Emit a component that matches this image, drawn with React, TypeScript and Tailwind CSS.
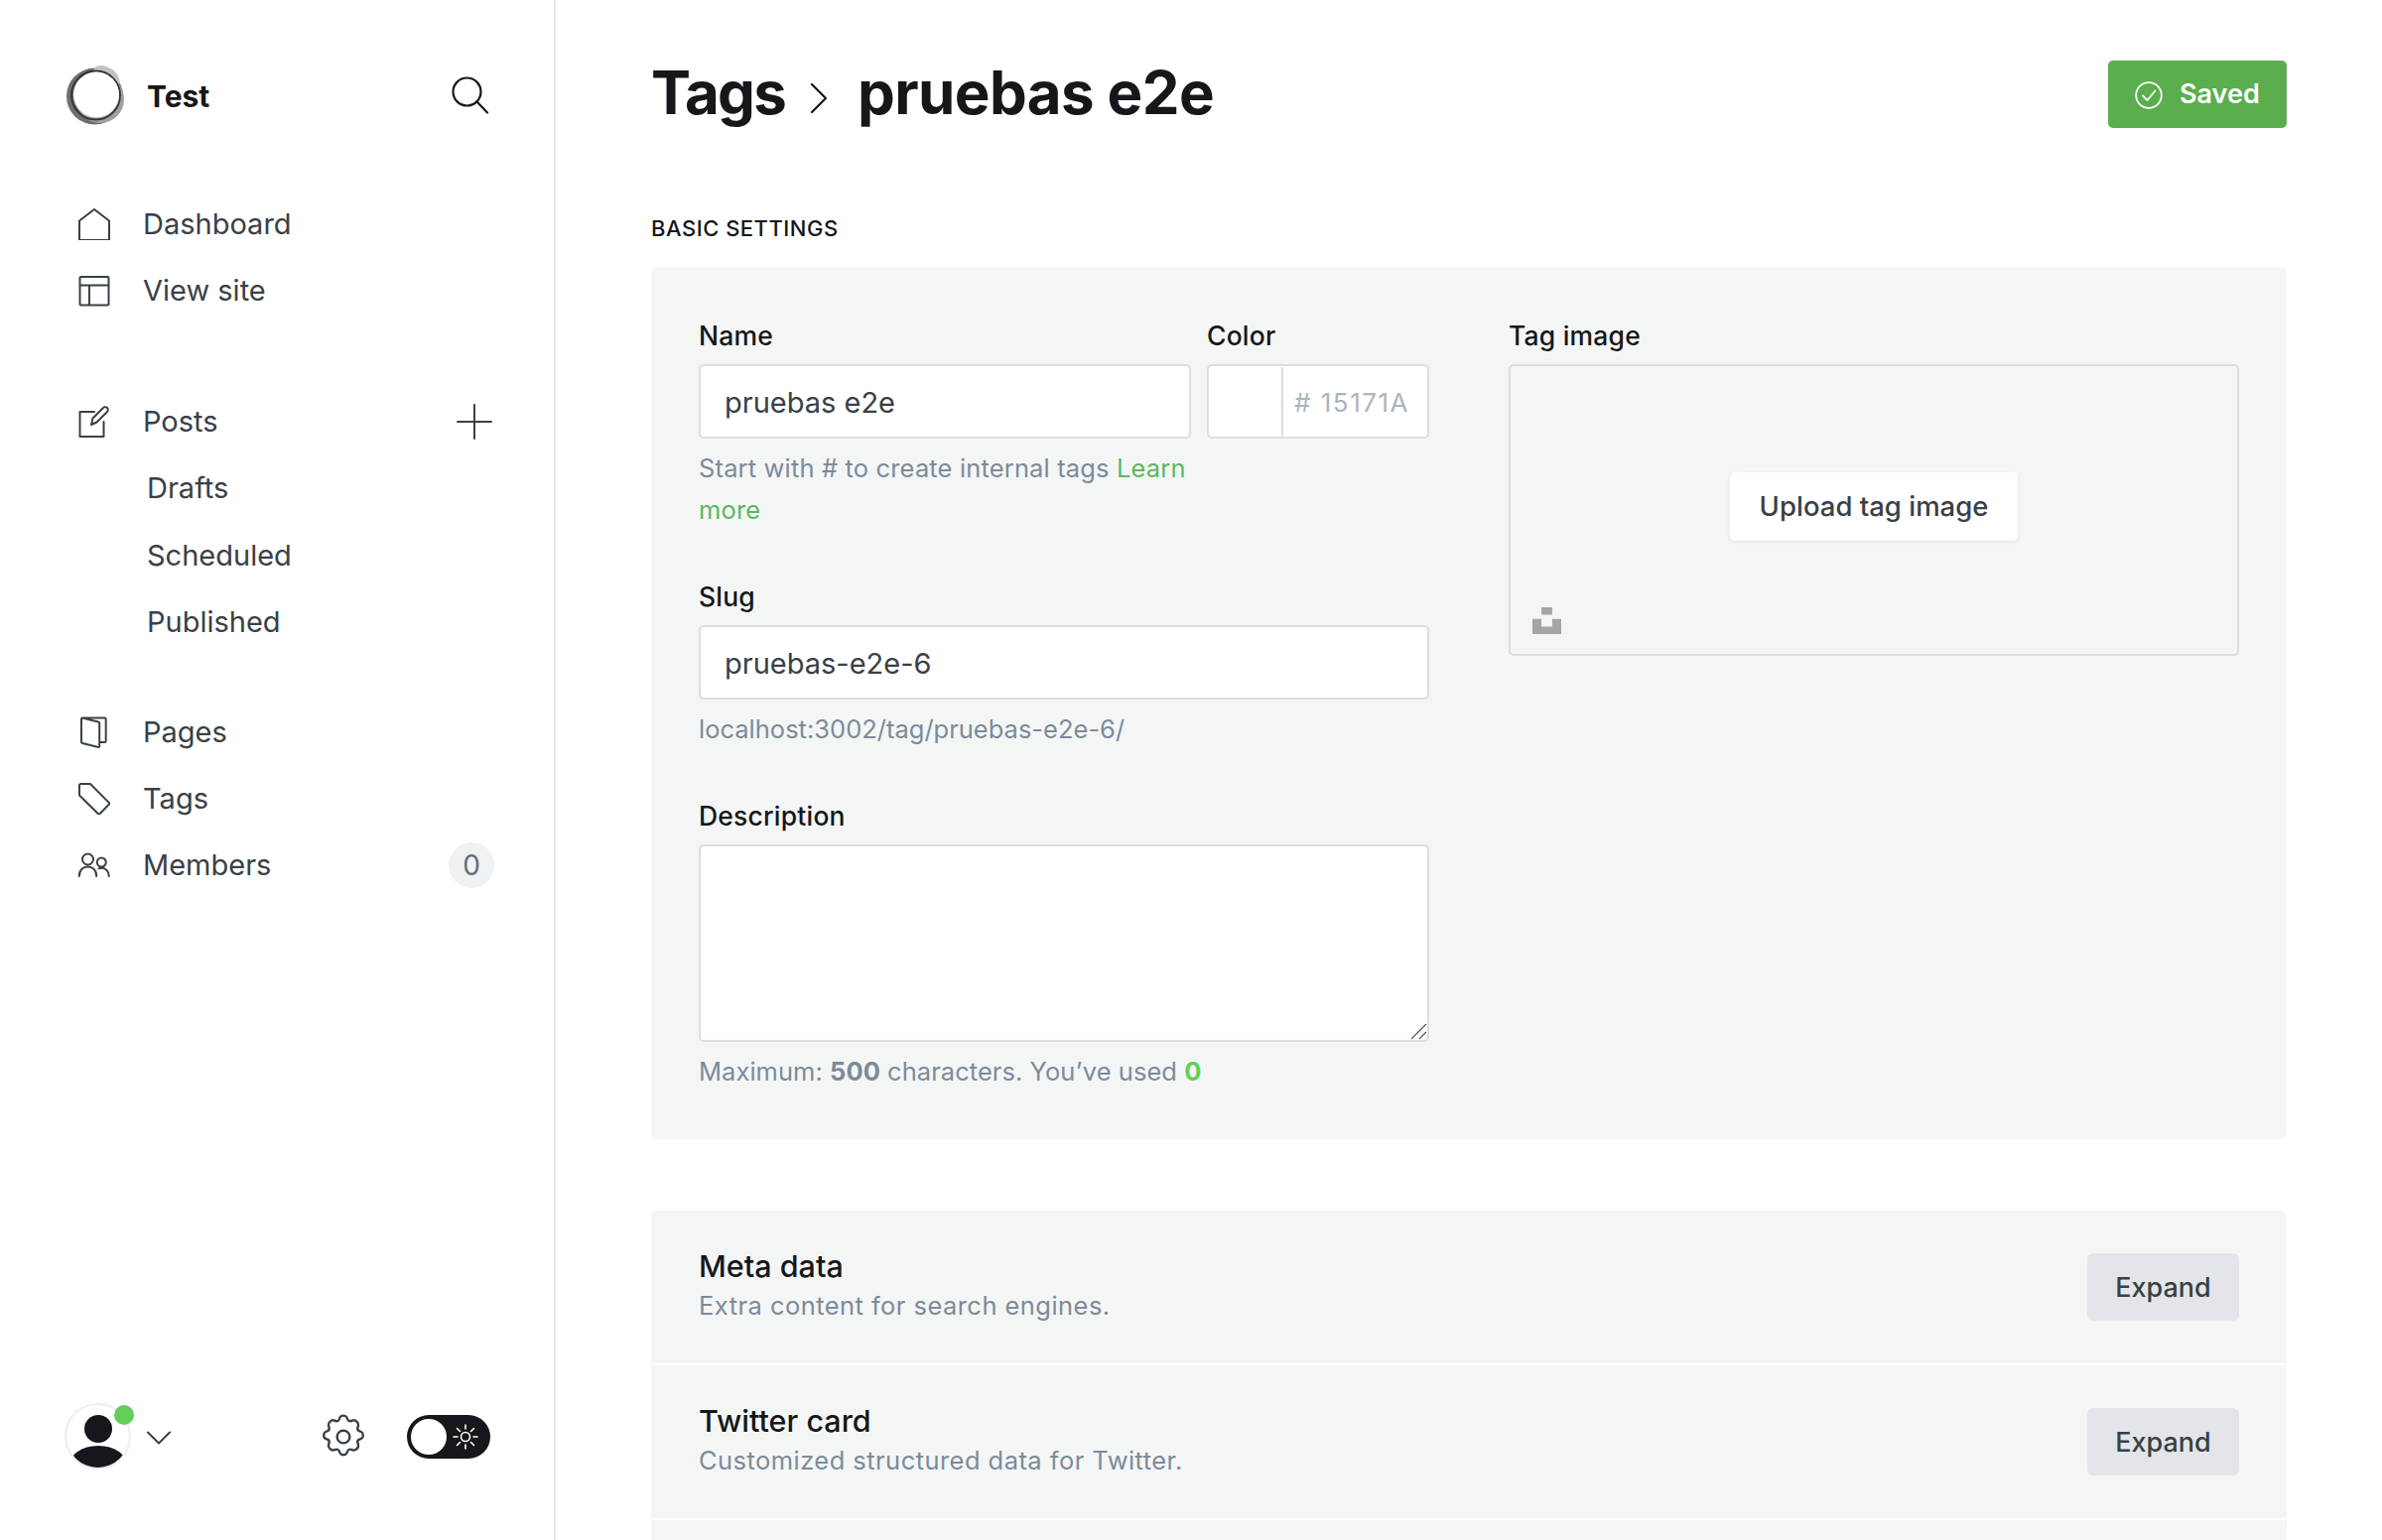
import React from 'react';

const I = "[font-family:Inter,'Liberation_Sans',sans-serif]";

function Icon({d,w=32,h=32,vb='0 0 32 32',sw=2,className=''}:{d:string;w?:number;h?:number;vb?:string;sw?:number;className?:string}){
  return <svg width={w} height={h} viewBox={vb} fill="none" stroke="currentColor" strokeWidth={sw} strokeLinecap="round" strokeLinejoin="round" className={className}><path d={d}/></svg>;
}

const ICONS:Record<string,string>={
  home:'M1 31.2V12.5L16 1l15 11.5v18.700a.8.8 0 0 1-.8.8H1.800a.8.8 0 0 1-.8-.8z',
  site:'M2.500 2h27a1 1 0 0 1 1 1v26.500a1 1 0 0 1-1 1h-27a1 1 0 0 1-1-1V3a1 1 0 0 1 1-1zM1.500 10.500h29M11 10.500v20',
  posts:'M16 6H1.500v25h24V16M13 19l1.500-6.500L25 2c1-1 3-1 4 0s1 3 0 4L18.500 16.500z',
  pages:'M4 1.500l16 4a1.500 1.500 0 0 1 1.200 1.500v23a1 1 0 0 1-1.200 1L4 27a1.500 1.500 0 0 1-1-1.500V2.500a1 1 0 0 1 1-1h22.500a1.200 1.200 0 0 1 1.200 1.200v22a1.200 1.200 0 0 1-1.200 1.200H21.200',
  tags:'M1 2.500v10L20 31.200a1 1 0 0 0 1.400 0L31 21.500a1 1 0 0 0 0-1.400L12 1H2.500A1.500 1.500 0 0 0 1 2.500z',
  members:'M.8 27c0-6 3.700-9.500 8.700-9.500s8.700 3.500 8.700 9.500M9.500 15.500a5.500 5.500 0 1 0 0-11 5.500 5.500 0 0 0 0 11zM20.500 19.300c.9-.4 1.800-.6 2.800-.6 4.500 0 7.500 3.500 7.500 8.300M23.300 17.500a4.500 4.500 0 1 0 0-9 4.500 4.500 0 0 0 0 9z',
};

const NAV_MAIN=[{l:'Dashboard',i:'home'},{l:'View site',i:'site'}];
const NAV_SUB=['Drafts','Scheduled','Published'];
const NAV_REST=[{l:'Pages',i:'pages'},{l:'Tags',i:'tags'},{l:'Members',i:'members',badge:'0'}];

function NavRow({label,icon,children}:{label:string;icon:string;children?:React.ReactNode}){
  return (
    <div className="h-[67.2px] flex items-center pl-[79px] pr-[60px] text-[#394047]">
      <Icon d={ICONS[icon]} className="shrink-0"/>
      <span className="ml-[33px] text-[29px] flex-1">{label}</span>
      {children}
    </div>
  );
}

function Sidebar(){
  return (
    <aside className="w-[560px] shrink-0 h-full border-r-2 border-[#e6e8ea] flex flex-col">
      <div className="flex items-center pt-[66px] pl-[66px] pr-[65px]">
        <svg width="60" height="60" viewBox="0 0 60 60" className="shrink-0">
          <circle cx="29.500" cy="31" r="28.500" fill="#6e6e6e"/>
          <ellipse cx="35" cy="34" rx="24" ry="24" fill="#a0a0a0"/>
          <ellipse cx="41" cy="12" rx="15" ry="10" transform="rotate(35 41 12)" fill="#c2c2c2"/>
          <circle cx="30.500" cy="30" r="24.500" fill="none" stroke="#333" strokeWidth="1.800"/>
          <circle cx="31" cy="29.500" r="23" fill="#fff"/>
        </svg>
        <span className="ml-[22px] mt-[2px] text-[30px] font-bold text-[#15171a] flex-1">Test</span>
        <svg width="38" height="38" viewBox="0 0 38 38" fill="none" stroke="#15171a" strokeWidth="2.200" strokeLinecap="round"><circle cx="15.500" cy="15.500" r="14"/><path d="M25.500 25.500L36 36.500"/></svg>
      </div>
      <nav className="mt-[66px]">
        {NAV_MAIN.map(n=><NavRow key={n.l} label={n.l} icon={n.i}/>)}
      </nav>
      <nav className="mt-[65px]">
        <NavRow label="Posts" icon="posts">
          <svg width="36" height="36" viewBox="0 0 36 36" fill="none" stroke="#394047" strokeWidth="2" strokeLinecap="round" className="mr-[2px]"><path d="M18 1v34M1 18h34"/></svg>
        </NavRow>
        {NAV_SUB.map(s=>(
          <div key={s} className="h-[67.2px] flex items-center pl-[148px] text-[29px] text-[#394047]">{s}</div>
        ))}
      </nav>
      <nav className="mt-[44px]">
        {NAV_REST.map(n=>(
          <NavRow key={n.l} label={n.l} icon={n.i}>
            {n.badge&&<span className="w-[46px] h-[46px] rounded-full bg-[#eff1f2] grid place-items-center text-[28px] text-[#626d79]">{n.badge}</span>}
          </NavRow>
        ))}
      </nav>
      <div className="mt-auto mb-[71px] flex items-center pl-[65px] pr-[64px]">
        <div className="relative w-[67px] h-[67px] shrink-0">
          <div className="w-full h-full rounded-full border-2 border-[#eceef0] overflow-hidden">
            <svg width="63" height="63" viewBox="0 0 63 63" fill="#15171a"><ellipse cx="32" cy="24" rx="14" ry="14"/><ellipse cx="32" cy="62" rx="30" ry="21"/></svg>
          </div>
          <span className="absolute left-[50px] top-[2px] w-[20px] h-[20px] rounded-full bg-[#62cf57]"/>
        </div>
        <svg width="24" height="14" viewBox="0 0 24 14" fill="none" stroke="#394047" strokeWidth="2" strokeLinecap="round" strokeLinejoin="round" className="ml-[16px] mt-[2px] shrink-0"><path d="M1 1.500l11 11 11-11"/></svg>
        <svg width="48" height="48" viewBox="0 0 24 24" fill="none" stroke="#394047" strokeWidth="1.200" strokeLinecap="round" strokeLinejoin="round" className="ml-auto shrink-0"><path d="M12 8.800a3.200 3.200 0 1 0 0 6.400 3.200 3.200 0 0 0 0-6.400z"/><path d="M10.300 2.200c.5-1.200 2.900-1.200 3.400 0l.4 1c.3.700 1.100 1 1.800.8l1-.3c1.300-.3 3 1.400 2.600 2.600l-.3 1c-.2.700.1 1.500.8 1.800l1 .4c1.200.5 1.200 2.900 0 3.400l-1 .4c-.7.300-1 1.100-.8 1.800l.3 1c.3 1.300-1.400 3-2.600 2.600l-1-.3c-.7-.2-1.500.1-1.800.8l-.4 1c-.5 1.200-2.900 1.200-3.400 0l-.4-1c-.3-.7-1.100-1-1.800-.8l-1 .3c-1.300.3-3-1.400-2.600-2.600l.3-1c.2-.7-.1-1.500-.8-1.800l-1-.4c-1.200-.5-1.200-2.900 0-3.400l1-.4c.7-.3 1-1.100.8-1.800l-.3-1c-.3-1.300 1.400-3 2.600-2.600l1 .3c.7.200 1.500-.1 1.800-.8z"/></svg>
        <div className="ml-[40px] w-[84px] h-[44px] rounded-full bg-[#15171a] flex items-center pl-[4px] shrink-0">
          <span className="w-[36px] h-[36px] rounded-full bg-white"/>
          <svg width="26" height="26" viewBox="0 0 26 26" fill="none" stroke="#fff" strokeWidth="1.600" strokeLinecap="round" className="ml-[6px]"><circle cx="13" cy="13" r="4.500"/><path d="M13 1v4M13 21v4M1 13h4M21 13h4M4.500 4.500l3 3M18.500 18.500l3 3M21.500 4.500l-3 3M7.500 18.500l-3 3"/></svg>
        </div>
      </div>
    </aside>
  );
}

const INPUT="w-full h-[75px] bg-white border-2 border-[#dddee0] rounded-[5px] px-[24px] pt-[2px] text-[29px] text-[#394047] outline-none";

function Label({children}:{children:React.ReactNode}){
  return <div className="h-[42px] mb-[8px] leading-[42px] text-[26.500px] font-medium text-[#15171a] tracking-[0.2px]">{children}</div>;
}

function Hint({children,className}:{children:React.ReactNode;className:string}){
  return <p className={`mt-[9px] text-[25.500px] leading-[42px] text-[#7c8b9a] ${className}`}>{children}</p>;
}

function Expandable({title,desc}:{title:string;desc:string}){
  return (
    <div className="h-[153.500px] bg-[#f4f6f6] flex items-center justify-between px-[48px] mb-[2.500px] first:rounded-t-[6px]">
      <div className="-mt-[3px]">
        <div className="text-[30.500px] leading-[42px] font-medium text-[#15171a]">{title}</div>
        <div className="text-[25.500px] leading-[38px] text-[#7c8b9a] tracking-[0.45px]">{desc}</div>
      </div>
      <button className="w-[153px] h-[68px] pt-[2px] rounded-[6px] bg-[#e3e5e8] text-[#394047] text-[27px] font-medium">Expand</button>
    </div>
  );
}

export default function App(){
  return (
    <div className={`h-screen w-full flex overflow-hidden bg-white ${I}`}>
      <Sidebar/>
      <main className="flex-1 pl-[96px] pr-[96px] min-w-0">
        <header className="mt-[60px] h-[69px] flex items-center justify-between">
          <h1 className="flex items-center -mt-[4px] text-[60px] font-bold text-[#15171a]">
            <span className="tracking-[-1.750px]">Tags</span>
            <svg width="18" height="30" viewBox="0 0 18 30" fill="none" stroke="#15171a" strokeWidth="2.200" strokeLinecap="round" strokeLinejoin="round" className="ml-[25px] mr-[30px] mt-[12px]"><path d="M2 1l14 14L2 29"/></svg>
            <span className="tracking-[-0.6px]">pruebas e2e</span>
          </h1>
          <button className="w-[180px] h-[68px] pt-[2px] rounded-[5px] bg-[#5aae4e] text-white text-[27px] font-semibold flex items-center pl-[27px]">
            <svg width="28" height="28" viewBox="0 0 28 28" fill="none" stroke="#fff" strokeWidth="1.800" strokeLinecap="round" strokeLinejoin="round"><circle cx="14" cy="14" r="12.800"/><path d="M8 14.500l4.500 4.500 8-9.500"/></svg>
            <span className="ml-[17px]">Saved</span>
          </button>
        </header>
        <h2 className="mt-[85px] h-[32px] leading-[32px] text-[22px] font-medium text-[#15171a] tracking-[0.5px]">BASIC SETTINGS</h2>
        <section className="mt-[23px] bg-[#f4f6f6] rounded-[6px] pt-[48px] pb-[47px] px-[48px] grid grid-cols-[736px_736px] gap-x-[80px]">
          <div>
            <div className="flex gap-[16px]">
              <div className="w-[496px]">
                <Label>Name</Label>
                <input readOnly value="pruebas e2e" className={INPUT}/>
                <Hint className="tracking-[0.15px]">Start with # to create internal tags <a className="text-[#5cb85c]">Learn</a> <a className="text-[#5cb85c]">more</a></Hint>
              </div>
              <div className="w-[224px]">
                <Label>Color</Label>
                <div className="h-[75px] pt-[1px] bg-white border-2 border-[#dddee0] rounded-[5px] flex items-center">
                  <span className="w-[75px] h-full border-r-2 border-[#dddee0]"/>
                  <span className="ml-[11px] text-[26px] text-[#abb4be] tracking-[1.500px]"># 15171A</span>
                </div>
              </div>
            </div>
            <div className="mt-[45px]">
              <Label>Slug</Label>
              <input readOnly value="pruebas-e2e-6" className={INPUT}/>
              <Hint className="tracking-normal">localhost:3002/tag/pruebas-e2e-6/</Hint>
            </div>
            <div className="mt-[45px]">
              <Label>Description</Label>
              <div className="relative">
                <textarea readOnly className="block w-full h-[199px] bg-white border-2 border-[#dddee0] rounded-[5px] outline-none resize-none"/>
                <svg width="17" height="17" viewBox="0 0 17 17" stroke="#555" strokeWidth="1.200" className="absolute right-[2px] bottom-[2px]"><path d="M1 16L16 1M9 16l7-7"/></svg>
              </div>
              <Hint className="tracking-[0.04px]">Maximum: <b className="font-bold">500</b> characters. You’ve used <b className="font-bold text-[#62cf57]">0</b></Hint>
            </div>
          </div>
          <div>
            <Label>Tag image</Label>
            <div className="relative h-[294px] border-2 border-[#dddee0] rounded-[5px] flex items-center justify-center">
              <button className="w-[290px] h-[69px] -mt-[7px] bg-white rounded-[5px] shadow-[0_1px_4px_rgba(0,0,0,0.08)] text-[27.500px] font-medium text-[#394047]">Upload tag image</button>
              <svg width="29" height="27" viewBox="0 0 32 32" preserveAspectRatio="none" fill="#a5a5a5" className="absolute left-[22px] bottom-[20px]"><path d="M10 9V0h12v9H10zm12 5h10v18H0V14h10v9h12v-9z"/></svg>
            </div>
          </div>
        </section>
        <section className="mt-[72px]">
          <Expandable title="Meta data" desc="Extra content for search engines."/>
          <Expandable title="Twitter card" desc="Customized structured data for Twitter."/>
          <div className="h-[100px] bg-[#f4f6f6]"/>
        </section>
      </main>
    </div>
  );
}
